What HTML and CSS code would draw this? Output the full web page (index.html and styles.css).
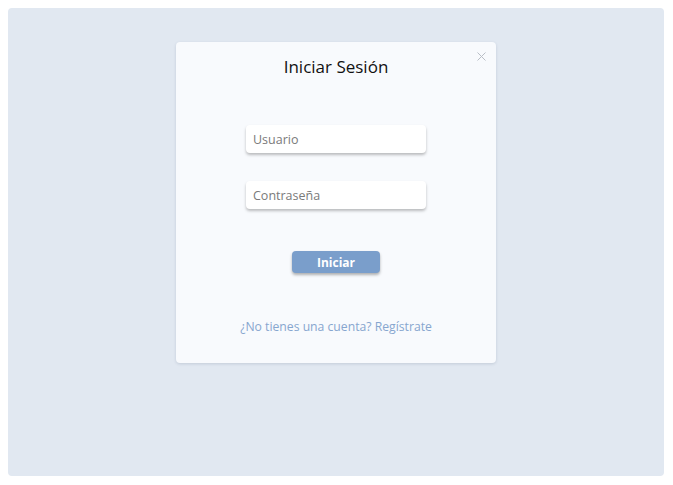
FILE: index.html
```html
<!DOCTYPE html>
<html lang="es">
<head>
<meta charset="utf-8">
<title>Iniciar Sesión</title>
<link rel="stylesheet" href="styles.css">
</head>
<body>
<div class="page">
  <div class="modal">
    <button class="close" aria-label="Cerrar">
      <svg width="9" height="9" viewBox="0 0 9 9"><path d="M0.5 0.5L8.5 8.5M8.5 0.5L0.5 8.5" stroke="#b9bec6" stroke-width="1" fill="none"/></svg>
    </button>
    <h1 class="title">Iniciar Sesión</h1>
    <form class="form">
      <input class="field" type="text" placeholder="Usuario">
      <input class="field" type="password" placeholder="Contraseña">
      <button class="submit" type="button">Iniciar</button>
    </form>
    <a class="link" href="#">¿No tienes una cuenta? Regístrate</a>
  </div>
</div>
</body>
</html>
```
FILE: styles.css
```css
* { box-sizing: border-box; }
html, body { background: #ffffff; }
body {
  margin: 8px;
  font-family: "Open Sans", "Noto Sans", sans-serif;
}
.page {
  width: 656px;
  height: 468px;
  background: #e1e8f1;
  border-radius: 4px;
  display: flex;
  justify-content: center;
  align-items: flex-start;
  padding-top: 34px;
}
.modal {
  position: relative;
  width: 320px;
  height: 321px;
  background: #f8fafd;
  border-radius: 4px;
  box-shadow: 0 1px 3px rgba(60, 80, 110, 0.18);
  display: flex;
  flex-direction: column;
  align-items: center;
}
.close {
  position: absolute;
  top: 8px;
  right: 8px;
  width: 13px;
  height: 13px;
  padding: 2px;
  border: none;
  background: none;
  display: flex;
}
.title {
  margin: 13px 0 0;
  font-size: 17px;
  font-weight: 500;
  color: #111111;
  line-height: 24px;
}
.form {
  margin-top: 46px;
  display: flex;
  flex-direction: column;
  align-items: center;
}
.field {
  width: 180px;
  height: 28px;
  border: none;
  border-radius: 4px;
  background: #ffffff;
  box-shadow: 0 2px 3px rgba(0, 0, 0, 0.25);
  padding: 0 7px;
  font-family: inherit;
  font-size: 12.5px;
  color: #555;
  outline: none;
}
.field + .field { margin-top: 28px; }
.field::placeholder { color: #7a7a7a; }
.submit {
  margin-top: 42px;
  width: 88px;
  height: 22px;
  border: none;
  border-radius: 4px;
  background: #7a9ecb;
  color: #ffffff;
  font-family: inherit;
  font-weight: 700;
  font-size: 12px;
  box-shadow: 0 2px 3px rgba(0, 0, 0, 0.3);
}
.link {
  margin-top: 45px;
  font-size: 12.2px;
  color: #87a6cf;
  text-decoration: none;
}
```
